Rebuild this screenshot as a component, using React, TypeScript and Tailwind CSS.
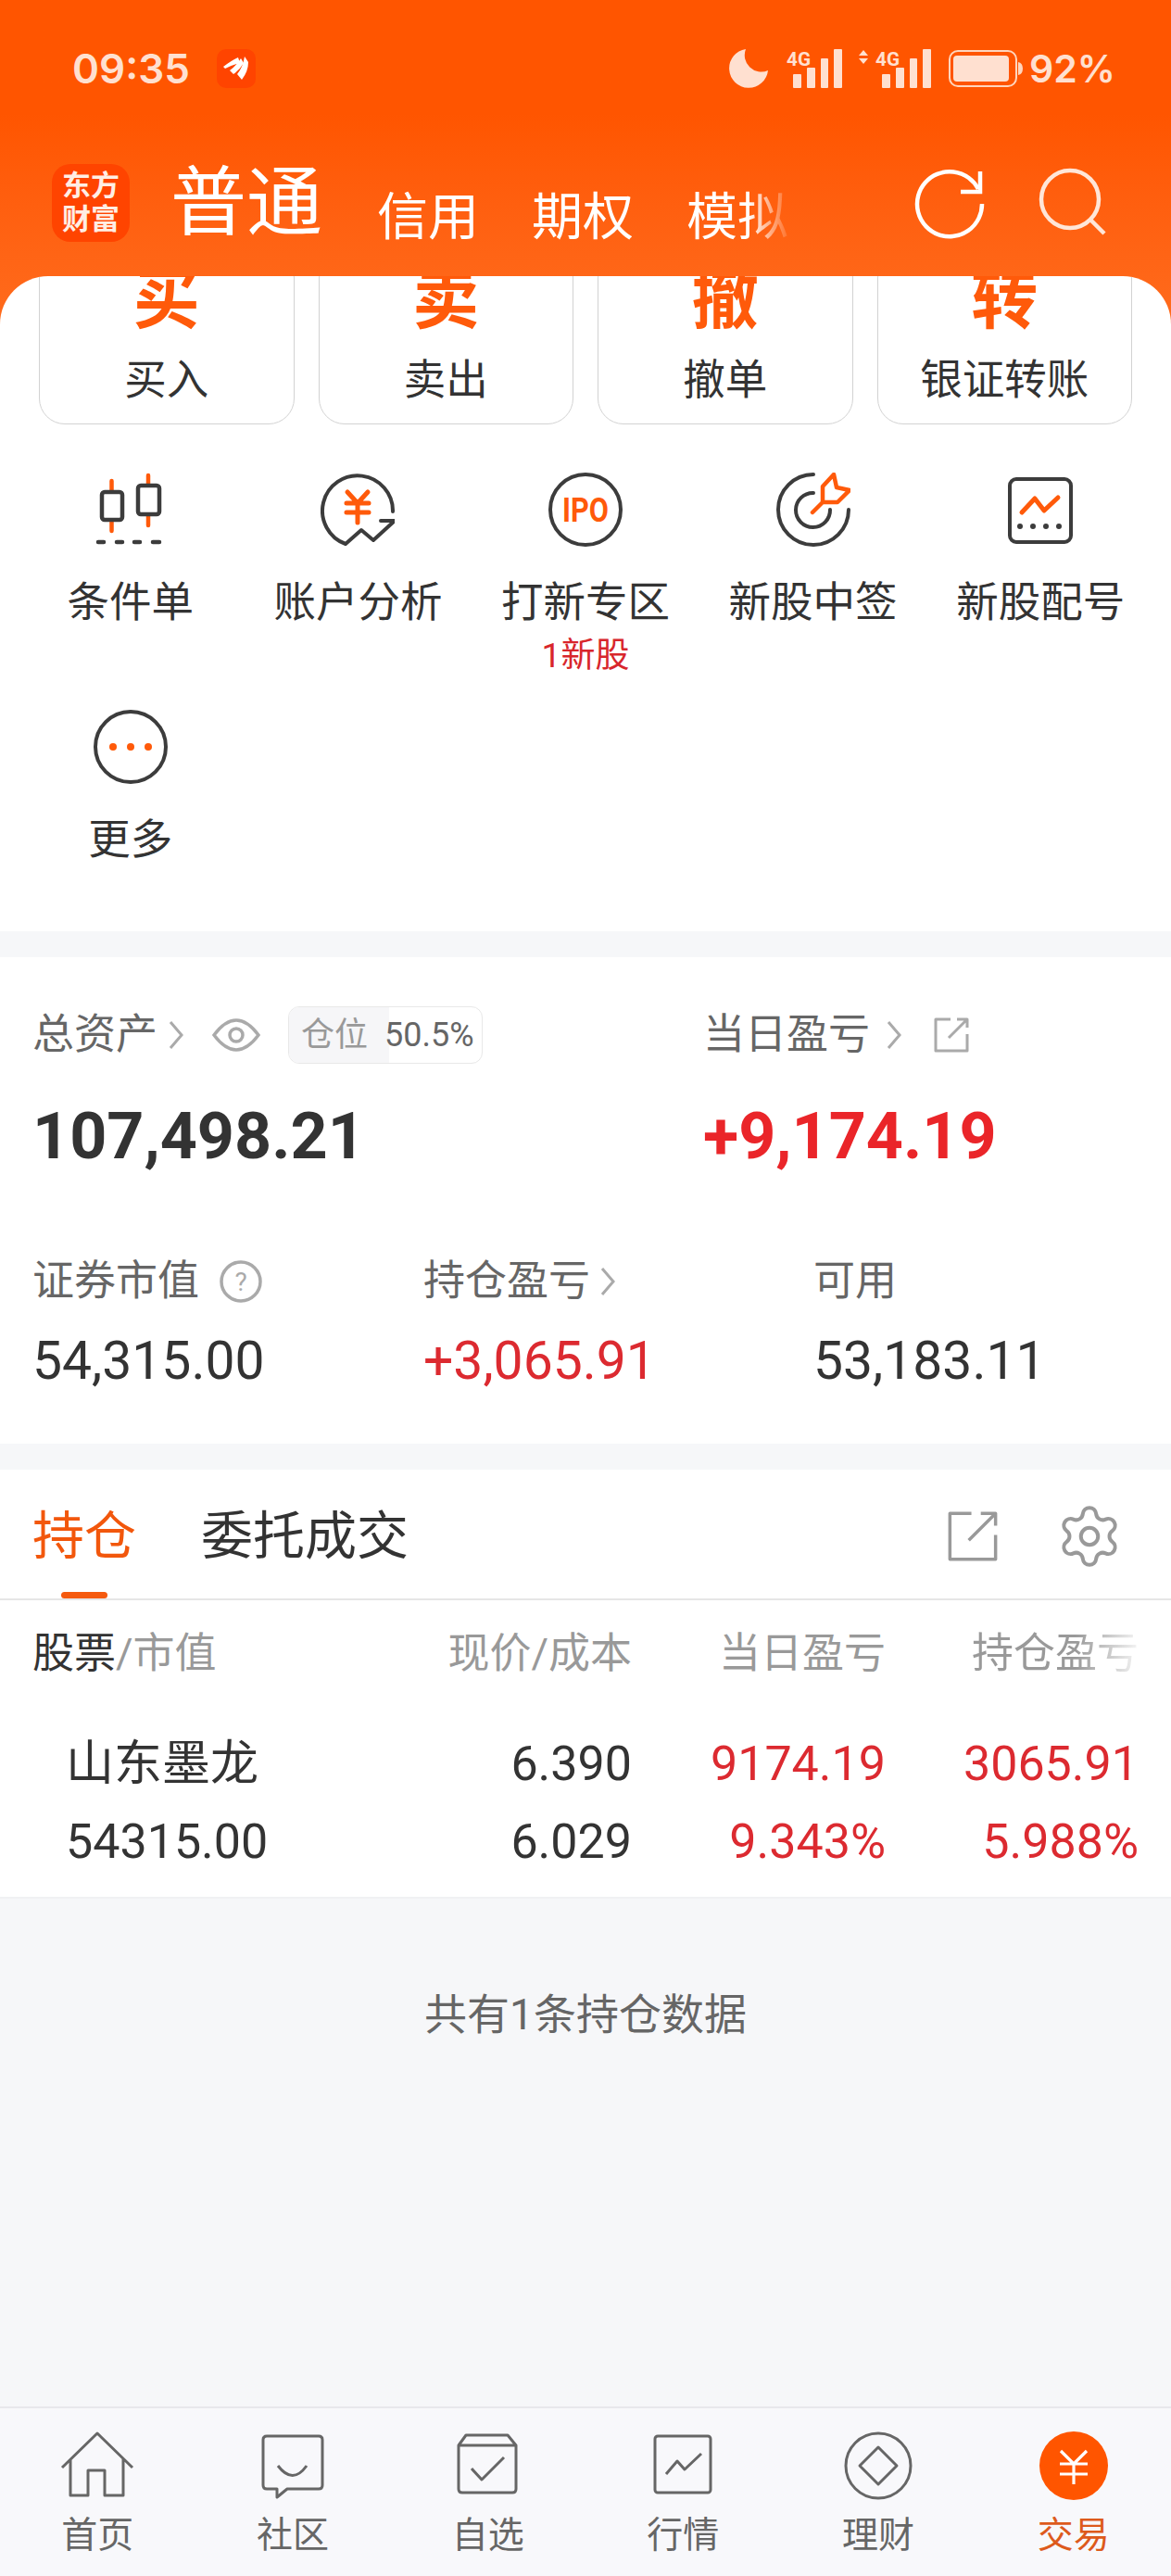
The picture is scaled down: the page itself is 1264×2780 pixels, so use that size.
import React from "react";
import { Settings } from "lucide-react";

const OR = "#ff5a0a";
const DK = "#3c3c3c";

function Signal({ arrows }: { arrows?: boolean }) {
  const w = arrows ? 78 : 60;
  const o = arrows ? 18 : 0;
  return (
    <svg width={w} height={42} viewBox={`0 0 ${w} 42`} fill="#ffe0d0">
      {arrows && (
        <g>
          <path d="M0 7 L5 1 L10 7Z" />
          <path d="M0 10 L5 16 L10 10Z" />
        </g>
      )}
      <text x={o} y={18} fontSize={21} fontWeight={700} fontFamily="Roboto" textLength={26} lengthAdjust="spacingAndGlyphs">4G</text>
      <rect x={o + 7} y={27} width={9} height={15} rx={1} />
      <rect x={o + 22} y={20} width={9} height={22} rx={1} />
      <rect x={o + 37} y={10} width={8} height={32} rx={1} />
      <rect x={o + 51} y={0} width={9} height={42} rx={1} />
    </svg>
  );
}

function StatusBar() {
  return (
    <div className="flex h-[42px] mt-[53px] items-center pl-[78px] pr-[60px] text-[#ffe0d0] font-['Inter',sans-serif] font-semibold">
      <span className="text-[44px] leading-[42px]">09:35</span>
      <span className="ml-[29px] w-[42px] h-[42px] rounded-[10px] bg-[#ff4400] flex items-center justify-center">
        <svg width="30" height="30" viewBox="0 0 30 30" fill="#fff">
          <path d="M1 13 Q10 6 17 3 L19 9 Q11 11 3 15Z" />
          <path d="M8 17 Q15 12 20 4 L23 9 Q19 16 12 21Z" />
          <path d="M16 21 Q22 14 24 2 L28 8 Q28 18 21 27Z" />
        </svg>
      </span>
      <span className="ml-auto flex items-center">
        <svg width="44" height="42" viewBox="0 0 44 42" fill="#ffe0d0">
          <path d="M19 0 A21 21 0 1 0 43 23 A18 18 0 0 1 19 0Z" />
        </svg>
        <span className="ml-[19px]"><Signal /></span>
        <span className="ml-[18px]"><Signal arrows /></span>
        <svg className="ml-[19px]" width="80" height="40" viewBox="0 0 80 40" fill="none">
          <rect x="1" y="1" width="72" height="38" rx="9" stroke="#ffd5bd" strokeWidth="2" />
          <rect x="5" y="6" width="60" height="28" rx="4" fill="#ffe0d0" />
          <path d="M75 13 Q80 14 80 20 Q80 26 75 27Z" fill="#ffd5bd" />
        </svg>
        <span className="ml-[7px] text-[41px] leading-[42px]">92%</span>
      </span>
    </div>
  );
}

function NavRow() {
  return (
    <div className="flex items-start mt-[82px] pl-[56px] pr-[69px] text-white">
      <div className="w-[84px] h-[84px] rounded-[20px] bg-[#ff4400] flex flex-col items-center justify-center text-[31px] leading-[36px] font-bold text-[#ffeee4]">
        <span>东方</span>
        <span>财富</span>
      </div>
      <div className="ml-[44px] mt-[2px] text-[82px] leading-[80px]">普通</div>
      <div className="ml-[59px] mt-[27px] flex gap-[57px] text-[55px] leading-[60px]">
        <span>信用</span>
        <span>期权</span>
        <span className="bg-linear-to-r from-white from-60% to-white/10 bg-clip-text text-transparent">模拟</span>
      </div>
      <div className="ml-auto flex gap-[50px] items-start">
        <svg className="mt-[3px]" width="80" height="80" viewBox="0 0 80 80" fill="none" stroke="#fff" strokeWidth="4.5">
          <path d="M75 40 A35 35 0 1 1 71 24" />
          <path d="M73 5 V27 H52" />
        </svg>
        <svg className="-mt-[2px]" width="80" height="80" viewBox="0 0 80 80" fill="none" stroke="#ffe6d8" strokeWidth="4.5">
          <circle cx="40" cy="40" r="31" />
          <path d="M63 63 L77 77" />
        </svg>
      </div>
    </div>
  );
}

const CARDS = [
  ["买", "买入"],
  ["卖", "卖出"],
  ["撤", "撤单"],
  ["转", "银证转账"],
];

function IconCandle() {
  return (
    <svg width="80" height="80" viewBox="0 0 80 80" fill="none" strokeWidth="4.5" strokeLinecap="round">
      <path d="M19.5 9 V63 M59 3 V57" stroke={OR} />
      <rect x="9" y="21" width="22" height="30" rx="3" stroke={DK} fill="#fff" />
      <rect x="48" y="14" width="23" height="31" rx="3" stroke={DK} fill="#fff" />
      <path d="M5 75 H11 M25 75 H31 M44 75 H50 M64 75 H71" stroke={DK} />
    </svg>
  );
}
function IconYen() {
  return (
    <svg width="80" height="80" viewBox="0 0 80 80" fill="none" strokeWidth="4" strokeLinecap="round" strokeLinejoin="round">
      <path d="M78 42 A38 38 0 1 0 27 77 L44 62 L57 73 L80 52 H65" stroke={DK} />
      <path d="M29 21 L40 33 L51 21 M28 33 H52 M28 43 H52 M40 33 V54" stroke={OR} strokeWidth="5" />
    </svg>
  );
}
function IconIpo() {
  return (
    <svg width="80" height="80" viewBox="0 0 80 80" fill="none">
      <circle cx="40" cy="40" r="38" stroke={DK} strokeWidth="4" />
      <text x="40" y="53" textAnchor="middle" fontSize="36" fontWeight="700" fontFamily="Roboto" fill={OR} textLength="50" lengthAdjust="spacingAndGlyphs">IPO</text>
    </svg>
  );
}
function IconTarget() {
  return (
    <svg width="80" height="80" viewBox="0 0 80 80" fill="none" strokeWidth="4" strokeLinecap="round" strokeLinejoin="round">
      <path d="M40 2 A38 38 0 1 0 78 40" stroke={DK} />
      <path d="M40 22 A18.5 18.5 0 1 0 58 40" stroke={DK} />
      <path d="M50 15 L62 2 L65 16 L79 19 L66 32 L50 32 Z M50 32 L39 43" stroke={OR} strokeWidth="4.5" />
    </svg>
  );
}
function IconChart() {
  return (
    <svg width="80" height="80" viewBox="0 0 80 80" fill="none" strokeLinecap="round" strokeLinejoin="round">
      <rect x="7" y="7" width="66" height="68" rx="7" stroke={DK} strokeWidth="4" />
      <path d="M20 43 L34 28 L44 41 L59 27" stroke={OR} strokeWidth="5" />
      <g fill={DK}>
        <circle cx="18" cy="58" r="3" />
        <circle cx="32" cy="58" r="3" />
        <circle cx="46" cy="58" r="3" />
        <circle cx="60" cy="58" r="3" />
      </g>
    </svg>
  );
}
function IconMore() {
  return (
    <svg width="80" height="80" viewBox="0 0 80 80" fill="none">
      <circle cx="40" cy="40" r="38" stroke={DK} strokeWidth="4" />
      <g fill={OR}>
        <circle cx="21" cy="40" r="4" />
        <circle cx="40" cy="40" r="4" />
        <circle cx="59" cy="40" r="4" />
      </g>
    </svg>
  );
}

const GRID: [React.ReactNode, string, string?][] = [
  [<IconCandle />, "条件单"],
  [<IconYen />, "账户分析"],
  [<IconIpo />, "打新专区", "1新股"],
  [<IconTarget />, "新股中签"],
  [<IconChart />, "新股配号"],
  [<IconMore />, "更多"],
];

function Sheet() {
  return (
    <div className="relative -mt-[52px] bg-white rounded-t-[52px] overflow-hidden">
      <div className="-mt-[26px] grid grid-cols-4 gap-[26px] pl-[42px] pr-[42px]">
        {CARDS.map(([g, l]) => (
          <div key={l} className="h-[186px] border border-[#d2d2d2] rounded-[28px] flex flex-col items-center pt-[15px]">
            <div className="text-[72px] leading-[72px] font-bold text-[#ff5a0a]">{g}</div>
            <div className="mt-[21px] text-[45.5px] leading-[60px] text-[#333]">{l}</div>
          </div>
        ))}
      </div>
      <div className="grid grid-cols-5 gap-y-[38px] px-[18px] pt-[52px] pb-[68px]">
        {GRID.map(([icon, label, sub]) => (
          <div key={label} className="flex flex-col items-center">
            {icon}
            <div className="mt-[31px] text-[45.5px] leading-[60px] text-[#333] whitespace-nowrap">{label}</div>
            {sub && <div className="mt-[7px] text-[37px] leading-[40px] text-[#d8262c]">{sub}</div>}
          </div>
        ))}
      </div>
    </div>
  );
}

function Chevron({ className }: { className?: string }) {
  return (
    <svg className={className} width="18" height="34" viewBox="0 0 18 34" fill="none" stroke="#aaa" strokeWidth="3">
      <path d="M3 3 L15 17 L3 31" />
    </svg>
  );
}

function ExternalIcon({ size, color, sw }: { size: number; color: string; sw: number }) {
  return (
    <svg width={size} height={size} viewBox="0 0 40 40" fill="none" stroke={color} strokeWidth={sw} strokeLinejoin="round">
      <path d="M19 3 H3 V37 H37 V19" />
      <path d="M17 23 L37 3 M26 3 H37 V12" />
    </svg>
  );
}

function Assets() {
  return (
    <div className="bg-white pt-[54px] pb-[54px] pl-[35px]">
      <div className="flex h-[60px]">
        <div className="w-[724px] flex items-center text-[45px] leading-[60px] text-[#666]">
          <span>总资产</span>
          <Chevron className="ml-[11px]" />
          <svg className="ml-[30px]" width="52" height="36" viewBox="0 0 52 36" fill="none" stroke="#aaa" strokeWidth="3.5">
            <path d="M2 18 Q26 -14 50 18 Q26 50 2 18Z" />
            <circle cx="26" cy="18" r="7" />
          </svg>
          <div className="ml-[30px] h-[62px] w-[210px] flex items-center border border-[#e8e8e8] rounded-[12px] overflow-hidden">
            <div className="w-[108px] h-full bg-[#f6f6f8] flex items-center pl-[13px] text-[36px] leading-[60px] text-[#999]">仓位</div>
            <div className="-ml-[5px] text-[36px] leading-[60px] text-[#666]">50.5%</div>
          </div>
        </div>
        <div className="flex items-center text-[45px] leading-[60px] text-[#666]">
          <span>当日盈亏</span>
          <Chevron className="ml-[17px]" />
          <span className="ml-[33px] flex"><ExternalIcon size={40} color="#aaa" sw={3} /></span>
        </div>
      </div>
      <div className="flex mt-[39px] text-[70px] leading-[80px] font-bold">
        <div className="w-[724px] text-[#333]">107,498.21</div>
        <div className="text-[#ea2529]">+9,174.19</div>
      </div>
      <div className="flex mt-[87px] text-[45px] leading-[60px] text-[#666]">
        <div className="w-[422px] flex items-center">
          <span>证券市值</span>
          <svg className="ml-[22px]" width="46" height="46" viewBox="0 0 46 46" fill="none">
            <circle cx="23" cy="23" r="21" stroke="#aaa" strokeWidth="3.5" />
            <text x="23" y="33" textAnchor="middle" fontSize="28" fontFamily="Roboto" fill="#aaa">?</text>
          </svg>
        </div>
        <div className="w-[421px] flex items-center">
          <span>持仓盈亏</span>
          <Chevron className="ml-[10px]" />
        </div>
        <div>可用</div>
      </div>
      <div className="flex mt-[21px] text-[57px] leading-[70px] text-[#333]">
        <div className="w-[422px]">54,315.00</div>
        <div className="w-[421px] text-[#dc2a30]">+3,065.91</div>
        <div>53,183.11</div>
      </div>
    </div>
  );
}

function Positions() {
  const cols = "grid grid-cols-[447px_200px_274px_273px] pl-[35px]";
  return (
    <div className="bg-white mt-[28px] border-b-2 border-[#f0f1f3]">
      <div className="relative flex items-start h-[141px] pt-[32px] pl-[35px] pr-[51px] border-b-2 border-[#e6e6e6] text-[56px] leading-[80px]">
        <div className="flex flex-col items-center text-[#f2570c]">
          <span>持仓</span>
          <span className="mt-[20px] w-[50px] h-[7px] rounded-full bg-[#f55a0e]" />
        </div>
        <div className="ml-[70px] text-[#333]">委托成交</div>
        <div className="ml-auto flex items-center gap-[60px] h-[80px]">
          <ExternalIcon size={58} color="#999" sw={2.4} />
          <Settings size={74} color="#999" strokeWidth={1.3} />
        </div>
      </div>
      <div className={`${cols} pt-[28px] text-[45px] leading-[60px] text-[#999]`}>
        <div><span className="text-[#333]">股票</span>/市值</div>
        <div className="text-right whitespace-nowrap">现价/成本</div>
        <div className="text-right">当日盈亏</div>
        <div className="text-right bg-linear-to-r from-[#999] from-75% to-[#999]/10 bg-clip-text text-transparent">持仓盈亏</div>
      </div>
      <div className={`${cols} mt-[59px] text-[52px] leading-[60px]`}>
        <div className="pl-[36px] text-[#333]">山东墨龙</div>
        <div className="text-right text-[#333]">6.390</div>
        <div className="text-right text-[#dc2a30]">9174.19</div>
        <div className="text-right text-[#dc2a30]">3065.91</div>
      </div>
      <div className={`${cols} mt-[24px] pb-[29px] text-[52px] leading-[60px]`}>
        <div className="pl-[36px] text-[#333]">54315.00</div>
        <div className="text-right text-[#333]">6.029</div>
        <div className="text-right text-[#dc2a30]">9.343%</div>
        <div className="text-right text-[#dc2a30]">5.988%</div>
      </div>
    </div>
  );
}

const NAVC = "#666";
const TABS: [React.ReactNode, string][] = [
  [<path d="M2 40 L40 3 L78 40 M11 31 V70 H30 V43 H48 V70 H68 V31" />, "首页"],
  [<g><path d="M12 6 H68 Q72 6 72 10 V59 Q72 63 68 63 H34 L23 72 V63 H12 Q8 63 8 59 V10 Q8 6 12 6Z" /><path d="M24 38 Q40 59 55 38" /></g>, "社区"],
  [<g><path d="M16 5 H61 L70 16 V63 Q70 67 66 67 H12 Q8 67 8 63 V16Z M8 16 H70" /><path d="M22 41 L33 53 L57 29" /></g>, "自选"],
  [<g><rect x="10" y="6" width="60" height="61" rx="3" /><path d="M22 47 L34 33 L42 42 L60 25" /></g>, "行情"],
  [<g><circle cx="40" cy="38" r="35" /><path d="M40 18 L60 38 L40 58 L20 38Z" /></g>, "理财"],
];

function BottomNav() {
  return (
    <div className="grid grid-cols-6 h-[183px] border-t-2 border-[#e8e8ec] bg-[#f8f8fb] pt-[24px]">
      {TABS.map(([d, l]) => (
        <div key={l} className="flex flex-col items-center">
          <svg width="80" height="80" viewBox="0 0 80 80" fill="none" stroke={NAVC} strokeWidth="3" strokeLinejoin="round">{d}</svg>
          <div className="mt-[8px] text-[39px] leading-[50px] text-[#666]">{l}</div>
        </div>
      ))}
      <div className="flex flex-col items-center">
        <svg width="80" height="80" viewBox="0 0 80 80" fill="none">
          <circle cx="40" cy="38" r="37" fill="#ff5500" />
          <path d="M26 22 L40 36 L54 22 M25 36 H55 M25 47 H55 M40 36 V58" stroke="#fff" strokeWidth="3.2" />
        </svg>
        <div className="mt-[8px] text-[39px] leading-[50px] text-[#dd5a1c]">交易</div>
      </div>
    </div>
  );
}

export default function App() {
  return (
    <div className="w-[1264px] h-[2780px] flex flex-col bg-[#f6f7f9] font-['Roboto','Noto_Sans_CJK_SC',sans-serif] overflow-hidden">
      <div className="h-[350px] shrink-0 bg-linear-to-b from-[#ff5500] from-35% to-[#ff6b1c] flex flex-col">
        <StatusBar />
        <NavRow />
      </div>
      <Sheet />
      <div className="mt-[28px]">
        <Assets />
      </div>
      <Positions />
      <div className="flex-1 pt-[95px] text-center text-[46px] leading-[60px] text-[#666]">共有1条持仓数据</div>
      <BottomNav />
    </div>
  );
}
